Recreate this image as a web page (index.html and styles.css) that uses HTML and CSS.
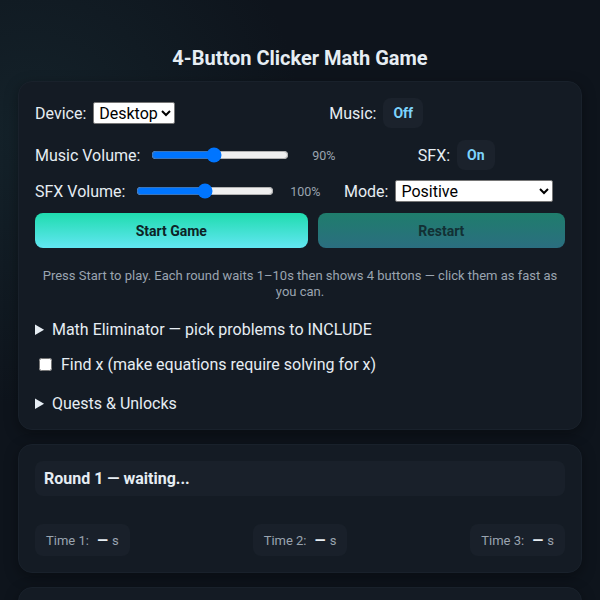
FILE: index.html
```html
<!DOCTYPE html>
<html lang="en">
<head>
    <meta charset="UTF-8">
    <title>4-Button Clicker Math Game</title>
    <link rel="stylesheet" href="styles.css">
</head>
<body>
<div class="app">
    <h1 class="title">4-Button Clicker Math Game</h1>

    <div class="card">
        <div class="row row-first">
            <label class="field">Device:
                <select class="sel">
                    <option>Desktop</option>
                    <option>Mobile</option>
                </select>
            </label>
            <div class="field">Music: <button class="toggle">Off</button></div>
        </div>
        <div class="row">
            <label class="field">Music Volume:
                <input type="range" class="range" min="0" max="200" value="90">
                <span class="pct">90%</span>
            </label>
            <div class="field">SFX: <button class="toggle">On</button></div>
        </div>
        <div class="row row-last">
            <label class="field">SFX Volume:
                <input type="range" class="range" min="0" max="200" value="100">
                <span class="pct">100%</span>
            </label>
            <label class="field">Mode:
                <select class="sel sel-mode">
                    <option>Positive</option>
                    <option>Negative</option>
                    <option>Mixed</option>
                </select>
            </label>
        </div>
        <div class="row btns">
            <button class="btn btn-start">Start Game</button>
            <button class="btn btn-restart">Restart</button>
        </div>
        <p class="help">Press Start to play. Each round waits 1–10s then shows 4 buttons — click them as fast as you can.</p>

        <details class="opt">
            <summary>Math Eliminator — pick problems to INCLUDE</summary>
        </details>
        <label class="opt check"><input type="checkbox"> Find x (make equations require solving for x)</label>
        <details class="opt">
            <summary>Quests &amp; Unlocks</summary>
        </details>
    </div>

    <div class="card">
        <div class="status">Round 1 — waiting...</div>
        <div class="times">
            <div class="chip">Time 1: <b>—</b> s</div>
            <div class="chip">Time 2: <b>—</b> s</div>
            <div class="chip">Time 3: <b>—</b> s</div>
        </div>
    </div>

    <div class="card"></div>
</div>
</body>
</html>
```

FILE: styles.css
```css
* {
    box-sizing: border-box;
}
body {
    margin: 0;
    min-height: 100vh;
    font-family: Roboto, "Liberation Sans", sans-serif;
    color: #e6edf3;
    background: radial-gradient(circle at 5% 20%, #14222a 0, rgba(20, 34, 42, 0) 35%), #0e141c;
}
.app {
    padding: 44px 18px 0;
}
.title {
    margin: 0 0 9px;
    font-size: 20px;
    line-height: 28px;
    text-align: center;
    font-weight: 700;
}
.card {
    background: #141b24;
    border: 1px solid #19212b;
    border-radius: 14px;
    padding: 16px 16px 16px;
    margin-bottom: 14px;
    box-shadow: 0 4px 14px rgba(0, 0, 0, .35);
    min-height: 60px;
}
.row {
    display: flex;
    gap: 12px;
    margin-bottom: 10px;
    align-items: center;
}
.row-first {
    margin-bottom: 12px;
}
.row-last {
    margin-bottom: 11px;
}
.field {
    flex: 1 1 auto;
    display: flex;
    align-items: center;
    gap: 7px;
    font-size: 16px;
}
.sel {
    font-family: Roboto, "Liberation Sans", sans-serif;
    font-size: 16px;
    height: 22px;
    padding: 0 0 0 1px;
    border: 1px solid #767676;
    border-radius: 2px;
    background: #fff;
    color: #000;
}
.sel-mode {
    width: 158px;
}
.toggle {
    font-family: inherit;
    font-size: 14px;
    font-weight: 700;
    color: #7dd3fc;
    background: #1b222c;
    border: 0;
    border-radius: 8px;
    height: 30px;
    padding: 0 10px;
}
.range {
    width: 138px;
    margin: 0 0 0 4px;
    accent-color: #0075ff;
}
.pct {
    min-width: 39px;
    text-align: right;
    font-size: 12.5px;
    color: #9aa4b0;
}
.btns {
    gap: 10px;
    margin-bottom: 0;
}
.btn {
    flex: 1 1 auto;
    height: 35px;
    border: 0;
    border-radius: 8px;
    font-family: inherit;
    font-size: 14px;
    font-weight: 700;
    color: #0d2326;
}
.btn-start {
    background: linear-gradient(#1fdcae, #62e6f2);
}
.btn-restart {
    background: linear-gradient(#1f7d6c, #2b6e80);
    color: #123034;
}
.help {
    margin: 20px 0 20px;
    font-size: 13px;
    line-height: 16px;
    text-align: center;
    color: #9aa4b0;
}
.opt {
    display: block;
    font-size: 16px;
    margin-bottom: 16px;
}
.opt summary {
    cursor: pointer;
}
.check {
    display: flex;
    align-items: center;
    gap: 9px;
    padding-left: 4px;
    margin-bottom: 20px;
}
.check input {
    margin: 0;
    width: 13px;
    height: 13px;
}
.opt:last-child {
    margin-bottom: 0;
}
.status {
    background: #19202a;
    border-radius: 8px;
    height: 35px;
    line-height: 35px;
    padding: 0 9px;
    font-size: 16px;
    font-weight: 700;
    margin-bottom: 28px;
}
.times {
    display: flex;
    justify-content: space-between;
}
.chip {
    background: #19202a;
    border-radius: 8px;
    height: 32px;
    line-height: 32px;
    padding: 0 11px;
    font-size: 13px;
    color: #9aa4b0;
}
.chip b {
    color: #e6edf3;
    font-size: 14px;
    margin: 0 1px 0 5px;
}
```
